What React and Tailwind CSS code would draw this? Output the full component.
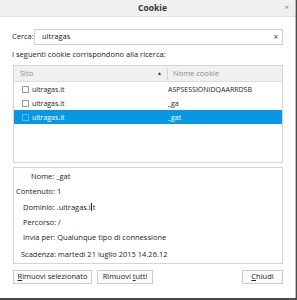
export default function App() {
  const rows = [
    { site: "ultragas.it", name: "ASPSESSIONIDQAARRDSB" },
    { site: "ultragas.it", name: "_ga" },
    { site: "ultragas.it", name: "_gat", selected: true },
  ]

  return (
    <div className="w-[297px] h-[300px] bg-[#4b4b4b] overflow-hidden" style={{ fontFamily: '"Open Sans", "Noto Sans", sans-serif' }}>
      <div className="w-[296px] h-[298px] bg-white border-r border-[#b9b9b9] flex flex-col text-[#222]">
        {/* title bar */}
        <div className="relative h-[17px] shrink-0 bg-[#f0f0f0] border-b border-[#e2e2e2] flex items-center justify-center">
          <span className="text-[8.5px] font-bold text-[#333] leading-none pl-[10px]">Cookie</span>
          <span className="absolute right-[6px] top-[3px] text-[8px] text-[#777] leading-none">×</span>
        </div>

        <div className="flex flex-col px-[12px] pr-[12px]">
          {/* search */}
          <div className="mt-[12px] flex items-center h-[16px]">
            <span className="w-[22px] text-[7.5px] leading-none">Cerca:</span>
            <div className="flex-1 h-[16px] border border-[#cfcfcf] flex items-center pl-[7px] pr-[4px]">
              <span className="flex-1 text-[7.5px] leading-none">ultragas</span>
              <span className="text-[8px] text-[#2a74c4] leading-none font-bold">×</span>
            </div>
          </div>

          <div className="h-[20px] flex items-center text-[7.5px] leading-none">
            I seguenti cookie corrispondono alla ricerca:
          </div>

          {/* table */}
          <div className="ml-[1px] h-[98px] border border-[#d4d4d4] flex flex-col">
            <div className="h-[16px] shrink-0 bg-[#f0f0f0] border-b border-[#dedede] flex items-center text-[7.5px] text-[#8a8a8a] leading-none">
              <div className="w-[153px] pl-[6px] flex items-center">
                <span className="flex-1">Sito</span>
                <span className="text-[5px] text-[#333] pr-[5px]">▲</span>
              </div>
              <div className="w-px h-[12px] bg-[#d6d6d6]" />
              <span className="pl-[5px]">Nome cookie</span>
            </div>
            {rows.map((r) => (
              <div
                key={r.name}
                className={
                  r.selected
                    ? "h-[14px] flex items-center bg-[#0897e0] text-white text-[7px] leading-none"
                    : "h-[14px] flex items-center text-[7px] leading-none"
                }
              >
                <div className="w-[154px] pl-[8px] flex items-center">
                  <span
                    className={
                      r.selected
                        ? "w-[7px] h-[7px] border border-[#5cb9ea] bg-[#0897e0] mr-[3px]"
                        : "w-[7px] h-[7px] border border-[#9a9a9a] bg-white mr-[3px]"
                    }
                  />
                  <span>{r.site}</span>
                </div>
                <span>{r.name}</span>
              </div>
            ))}
          </div>

          {/* details */}
          <div className="mt-[4px] ml-[1px] h-[97px] border border-[#d4d4d4] flex flex-col pt-[1px] text-[7.5px] leading-none">
            <div className="h-[16px] flex items-center pl-[17px]">Nome: _gat</div>
            <div className="h-[16px] flex items-center pl-[2px]">Contenuto: 1</div>
            <div className="h-[16px] flex items-center pl-[9px]">
              Dominio: .ultragas.i<span className="inline-block w-px h-[8px] bg-[#222] mx-[0.5px]" />t
            </div>
            <div className="h-[16px] flex items-center pl-[9px]">Percorso: /</div>
            <div className="h-[16px] flex items-center pl-[9px]">Invia per: Qualunque tipo di connessione</div>
            <div className="h-[18px] flex items-center pl-[7px]">Scadenza: martedì 21 luglio 2015 14.26.12</div>
          </div>

          {/* buttons */}
          <div className="mt-[6px] ml-[1px] flex items-center text-[7.5px] leading-none">
            <button className="h-[14px] w-[79px] border border-[#cbcbcb] bg-[#fbfbfb] flex items-center justify-center">
              <span className="underline">R</span>imuovi selezionato
            </button>
            <button className="ml-[5px] h-[14px] w-[56px] border border-[#cbcbcb] bg-[#fbfbfb] flex items-center justify-center">
              Rimuovi&nbsp;<span className="underline">t</span>utti
            </button>
            <div className="flex-1" />
            <button className="h-[14px] w-[41px] border border-[#cbcbcb] bg-[#fbfbfb] flex items-center justify-center">
              <span className="underline">C</span>hiudi
            </button>
          </div>
        </div>
      </div>
    </div>
  )
}
